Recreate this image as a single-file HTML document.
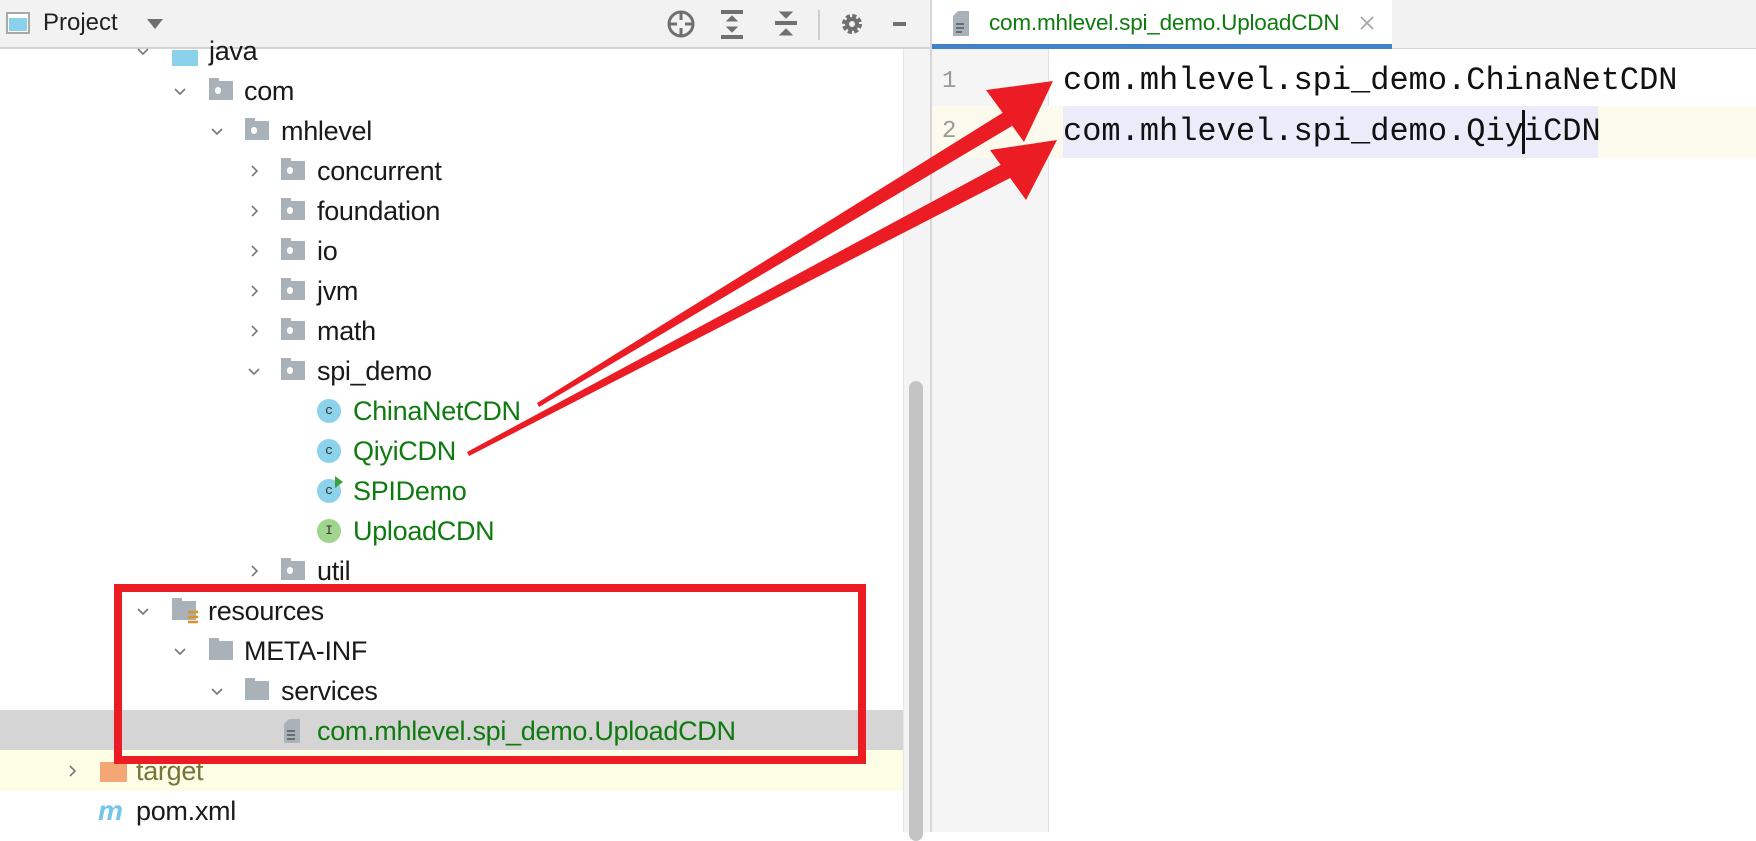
<!DOCTYPE html>
<html><head><meta charset="utf-8"><style>
*{margin:0;padding:0;box-sizing:border-box}
body{width:1756px;height:832px;overflow:hidden;background:#fff;font-family:"Liberation Sans",sans-serif;position:relative}
.abs{position:absolute}
.row{position:absolute;left:0;width:903px;height:40px}
.t{position:absolute;top:0;line-height:40px;font-size:27px;color:#1a1a1a;white-space:nowrap;letter-spacing:-0.3px}
.g{color:#0f7a0f}
.arr{position:absolute;top:13px;width:14px;height:14px}
.fold{position:absolute;top:10px;width:24px;height:19px;background:#aab2b9}
.fold:before{content:"";position:absolute;left:0;top:-3px;width:10px;height:4px;background:#aab2b9}
.fold.p:after{content:"";position:absolute;left:6px;top:6px;width:6px;height:7px;border-radius:3px;background:#fff}
.ci{position:absolute;top:8px;width:24px;height:24px;border-radius:12px;background:#8bd2ea;font-size:13px;line-height:24px;text-align:center;color:#333;font-family:"Liberation Mono",monospace}
.code{position:absolute;left:1063px;font-family:"Liberation Mono",monospace;font-size:32px;line-height:52px;color:#111;white-space:pre}
</style></head><body>
<div class="abs" style="left:0;top:0;width:930px;height:49px;background:#f2f2f2;border-bottom:2px solid #d4d4d4"></div>
<div class="abs" style="left:6px;top:12px;width:24px;height:22px;border:2px solid #a8a8a8;background:#fff"><div style="position:absolute;left:1px;top:4px;width:18px;height:13px;background:#8ad1ec"></div></div>
<div class="abs" style="left:43px;top:9px;font-size:24px;line-height:28px;color:#222">Project</div>
<svg class="abs" style="left:146px;top:18px" width="18" height="12"><path d="M1 1h16l-8 10z" fill="#6e6e6e"/></svg>
<svg class="abs" style="left:666px;top:8px" width="240" height="34" fill="none" stroke="#707070" stroke-width="3">
<circle cx="15" cy="16" r="12"/><path d="M15 4v8M15 20v8M3 16h8M19 16h8"/>
<path d="M55 4h22M55 29h22" stroke-width="4"/><path d="M61 13l5-5 5 5zM61 19l5 5 5-5z" fill="#707070" stroke-width="1"/>
<path d="M109 15h22" stroke-width="4"/><path d="M114 4l6 6 6-6zM114 27l6-6 6 6z" fill="#707070" stroke-width="1"/>
<path d="M153 2v30" stroke="#cfcfcf" stroke-width="2"/>
<circle cx="186" cy="16" r="7" stroke-width="6" stroke-dasharray="3.5 2"/><circle cx="186" cy="16" r="5" stroke-width="4"/>
<path d="M227 16h22" stroke-width="4"/>
</svg>
<div class="abs" style="left:903px;top:49px;width:27px;height:783px;background:#f4f4f4;border-left:1px solid #e6e6e6"></div>
<div class="abs" style="left:909px;top:381px;width:14px;height:460px;border-radius:7px;background:#c4c4c4"></div>
<div class="abs" style="left:930px;top:0;width:2px;height:832px;background:#d6d6d6"></div>
<div class="abs" style="left:0;top:710px;width:903px;height:40px;background:#d5d5d5"></div>
<div class="abs" style="left:0;top:750px;width:903px;height:41px;background:#fefde6"></div>
<div class="row" style="top:31px"><svg class="arr" style="left:136px" viewBox="0 0 14 14"><path d="M2 5l5 5 5-5" stroke="#777" stroke-width="1.6" fill="none"/></svg><div class="abs" style="left:172px;top:19px;width:26px;height:16px;background:#8ad1ec"></div><span class="t" style="left:209px">java</span></div>
<div class="row" style="top:71px"><svg class="arr" style="left:173px" viewBox="0 0 14 14"><path d="M2 5l5 5 5-5" stroke="#777" stroke-width="1.6" fill="none"/></svg><div class="fold p" style="left:209px"></div><span class="t" style="left:244px">com</span></div>
<div class="row" style="top:111px"><svg class="arr" style="left:210px" viewBox="0 0 14 14"><path d="M2 5l5 5 5-5" stroke="#777" stroke-width="1.6" fill="none"/></svg><div class="fold p" style="left:245px"></div><span class="t" style="left:281px">mhlevel</span></div>
<div class="row" style="top:151px"><svg class="arr" style="left:247px" viewBox="0 0 14 14"><path d="M5 2l5 5-5 5" stroke="#777" stroke-width="1.6" fill="none"/></svg><div class="fold p" style="left:281px"></div><span class="t" style="left:317px">concurrent</span></div>
<div class="row" style="top:191px"><svg class="arr" style="left:247px" viewBox="0 0 14 14"><path d="M5 2l5 5-5 5" stroke="#777" stroke-width="1.6" fill="none"/></svg><div class="fold p" style="left:281px"></div><span class="t" style="left:317px">foundation</span></div>
<div class="row" style="top:231px"><svg class="arr" style="left:247px" viewBox="0 0 14 14"><path d="M5 2l5 5-5 5" stroke="#777" stroke-width="1.6" fill="none"/></svg><div class="fold p" style="left:281px"></div><span class="t" style="left:317px">io</span></div>
<div class="row" style="top:271px"><svg class="arr" style="left:247px" viewBox="0 0 14 14"><path d="M5 2l5 5-5 5" stroke="#777" stroke-width="1.6" fill="none"/></svg><div class="fold p" style="left:281px"></div><span class="t" style="left:317px">jvm</span></div>
<div class="row" style="top:311px"><svg class="arr" style="left:247px" viewBox="0 0 14 14"><path d="M5 2l5 5-5 5" stroke="#777" stroke-width="1.6" fill="none"/></svg><div class="fold p" style="left:281px"></div><span class="t" style="left:317px">math</span></div>
<div class="row" style="top:351px"><svg class="arr" style="left:247px" viewBox="0 0 14 14"><path d="M2 5l5 5 5-5" stroke="#777" stroke-width="1.6" fill="none"/></svg><div class="fold p" style="left:281px"></div><span class="t" style="left:317px">spi_demo</span></div>
<div class="row" style="top:391px"><div class="ci" style="left:317px">c</div><span class="t g" style="left:353px">ChinaNetCDN</span></div>
<div class="row" style="top:431px"><div class="ci" style="left:317px">c</div><span class="t g" style="left:353px">QiyiCDN</span></div>
<div class="row" style="top:471px"><div class="ci" style="left:317px">c</div><svg class="abs" style="left:334px;top:5px" width="10" height="12"><path d="M1 0l8 6-8 6z" fill="#3aa13a"/></svg><span class="t g" style="left:353px">SPIDemo</span></div>
<div class="row" style="top:511px"><div class="ci" style="left:317px;background:#9fd58c">I</div><span class="t g" style="left:353px">UploadCDN</span></div>
<div class="row" style="top:551px"><svg class="arr" style="left:247px" viewBox="0 0 14 14"><path d="M5 2l5 5-5 5" stroke="#777" stroke-width="1.6" fill="none"/></svg><div class="fold p" style="left:281px"></div><span class="t" style="left:317px">util</span></div>
<div class="row" style="top:591px"><svg class="arr" style="left:136px" viewBox="0 0 14 14"><path d="M2 5l5 5 5-5" stroke="#777" stroke-width="1.6" fill="none"/></svg><div class="fold" style="left:172px"></div><svg class="abs" style="left:188px;top:19px" width="10" height="16"><path d="M0 2h10M0 7h10M0 12h10" stroke="#d9932b" stroke-width="2.5"/></svg><span class="t" style="left:208px">resources</span></div>
<div class="row" style="top:631px"><svg class="arr" style="left:173px" viewBox="0 0 14 14"><path d="M2 5l5 5 5-5" stroke="#777" stroke-width="1.6" fill="none"/></svg><div class="fold" style="left:209px"></div><span class="t" style="left:244px">META-INF</span></div>
<div class="row" style="top:671px"><svg class="arr" style="left:210px" viewBox="0 0 14 14"><path d="M2 5l5 5 5-5" stroke="#777" stroke-width="1.6" fill="none"/></svg><div class="fold" style="left:245px"></div><span class="t" style="left:281px">services</span></div>
<div class="row" style="top:711px"><svg class="abs" style="left:284px;top:8px" width="16" height="24"><path d="M5 0h11v24H0V5z" fill="#aab2b9"/><path d="M3 12h8M3 16h8M3 20h8" stroke="#555" stroke-width="1.6"/></svg><span class="t g" style="left:317px">com.mhlevel.spi_demo.UploadCDN</span></div>
<div class="row" style="top:751px"><svg class="arr" style="left:65px" viewBox="0 0 14 14"><path d="M5 2l5 5-5 5" stroke="#777" stroke-width="1.6" fill="none"/></svg><div class="abs" style="left:100px;top:11px;width:27px;height:20px;background:#f4a675"></div><span class="t" style="left:136px;color:#787438">target</span></div>
<div class="row" style="top:791px"><span class="t" style="left:98px;font-size:28px;font-weight:bold;font-style:italic;color:#71c6ea">m</span><span class="t" style="left:136px">pom.xml</span></div>
<div class="abs" style="left:932px;top:0;width:824px;height:49px;background:#f2f2f2;border-bottom:1px solid #d4d4d4"></div>
<div class="abs" style="left:932px;top:0;width:460px;height:49px;background:#fff;border-bottom:5px solid #4083c9"></div>
<svg class="abs" style="left:953px;top:11px" width="16" height="25"><path d="M5 0h11v25H0V5z" fill="#aab2b9"/><path d="M3 13h8M3 17h8M3 21h6" stroke="#555" stroke-width="1.6"/></svg>
<div class="abs" style="left:989px;top:9px;font-size:22.5px;line-height:28px;color:#0f7a0f;letter-spacing:-0.2px">com.mhlevel.spi_demo.UploadCDN</div>
<svg class="abs" style="left:1359px;top:15px" width="16" height="16"><path d="M2 2l12 12M14 2L2 14" stroke="#a8a8a8" stroke-width="1.8"/></svg>
<div class="abs" style="left:932px;top:49px;width:117px;height:783px;background:#f5f5f5;border-right:1px solid #e2e2e2"></div>
<div class="abs" style="left:932px;top:106px;width:824px;height:52px;background:#fcfaed"></div>
<div class="abs" style="left:1063px;top:106px;width:535px;height:52px;background:#ecebfa"></div>
<div class="abs" style="left:942px;top:56px;font-family:'Liberation Mono',monospace;font-size:24px;line-height:52px;color:#999">1</div>
<div class="abs" style="left:942px;top:106px;font-family:'Liberation Mono',monospace;font-size:24px;line-height:52px;color:#999">2</div>
<div class="code" style="top:55px">com.mhlevel.spi_demo.ChinaNetCDN</div>
<div class="code" style="top:106px">com.mhlevel.spi_demo.QiyiCDN</div>
<div class="abs" style="left:1522px;top:110px;width:3px;height:44px;background:#111"></div>
<svg class="abs" style="left:0;top:0" width="1756" height="832">
<rect x="118" y="588" width="744" height="172" fill="none" stroke="#ec1c24" stroke-width="8"/>
<polygon points="537,403 1004,112 1012,126 539,407" fill="#ec1c24"/>
<polygon points="1053,81 986,90 1024,142" fill="#ec1c24"/>
<polygon points="467,452 1004,163 1012,177 469,456" fill="#ec1c24"/>
<polygon points="1057,140 990,150 1026,200" fill="#ec1c24"/>
</svg>
</body></html>
